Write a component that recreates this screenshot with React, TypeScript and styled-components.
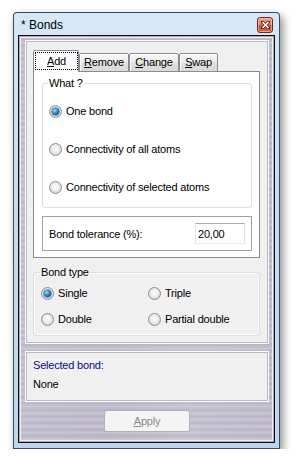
import React from "react";
import styled, { createGlobalStyle } from "styled-components";

const GlobalStyle = createGlobalStyle`
  html, body { margin: 0; padding: 0; background: #ffffff; }
  body {
    font-family: "Liberation Sans", Arial, sans-serif;
    font-size: 11px;
    color: #000;
  }
  * { box-sizing: border-box; }
`;

const Page = styled.div`
  padding: 12px 0 0 13px;
`;

const Window = styled.div`
  width: 267px;
  height: 437px;
  display: flex;
  flex-direction: column;
  padding: 0 4px 5px 4px;
  border: 1px solid rgba(25, 35, 55, 0.8);
  border-radius: 4px 4px 0 0;
  background: linear-gradient(180deg, #d6e7f8 0%, #c7ddf3 40%, #bdd6ef 100%);
  box-shadow: 3px 4px 9px rgba(0, 0, 0, 0.45);
`;

const TitleBar = styled.div`
  height: 22px;
  display: flex;
  align-items: flex-start;
  padding: 4px 2px 0 3px;
`;

const Title = styled.span`
  font-size: 12px;
  line-height: 14px;
  margin-top: 1px;
  color: #000;
`;

const CloseButton = styled.div`
  margin-left: auto;
  width: 16px;
  height: 16px;
  border: 1px solid #6b2a1e;
  border-radius: 3px;
  background: linear-gradient(180deg, #eba995 0%, #dd7d62 45%, #c84a2c 55%, #d4664a 100%);
  box-shadow: inset 0 0 0 1px rgba(255, 210, 200, 0.55);
  display: grid;
  place-items: center;
`;

const Client = styled.div`
  flex: 1;
  display: flex;
  flex-direction: column;
  padding: 4px 5px 0 6px;
  border: 1px solid #121212;
  background-color: #bfbbcb;
  background-image:
    repeating-linear-gradient(
      180deg,
      rgba(255, 255, 255, 0.22) 0 1px,
      transparent 1px 3px,
      rgba(70, 60, 100, 0.08) 3px 4px,
      transparent 4px 6px,
      rgba(255, 255, 255, 0.14) 6px 7px,
      transparent 7px 9px,
      rgba(70, 60, 100, 0.06) 9px 11px,
      transparent 11px 13px
    ),
    linear-gradient(90deg, rgba(255,255,255,0.08), rgba(255,255,255,0) 35%, rgba(255,255,255,0.12) 65%, rgba(255,255,255,0.02));
  box-shadow: inset 0 0 0 1px #a9a6b4, inset 0 0 0 2px rgba(255, 255, 255, 0.75);
`;

const Panel = styled.div<{ $pad: string; $mt?: number; $gap?: number }>`
  display: flex;
  flex-direction: column;
  gap: ${(p) => p.$gap ?? 0}px;
  margin-top: ${(p) => p.$mt ?? 0}px;
  border: 1px solid #fbfbfb;
  box-shadow: inset 0 0 0 1px #b9b9bf;
  background: #f0f0f0;
  padding: ${(p) => p.$pad};
`;

const TabStrip = styled.div`
  position: relative;
  z-index: 1;
  display: flex;
  align-items: flex-end;
  height: 22px;
  margin-bottom: -1px;
`;

const Tab = styled.div<{ $w: number; $active?: boolean }>`
  width: ${(p) => p.$w}px;
  height: ${(p) => (p.$active ? 22 : 19)}px;
  border: 1px solid #898c95;
  border-bottom: ${(p) => (p.$active ? "none" : "1px solid #898c95")};
  border-radius: 2px 2px 0 0;
  background: ${(p) =>
    p.$active
      ? "#ffffff"
      : "linear-gradient(180deg, #f6f6f6 0%, #ececec 48%, #e0e0e0 52%, #d9d9d9 100%)"};
  box-shadow: ${(p) => (p.$active ? "none" : "inset 0 1px 0 #fff, inset 1px 0 0 #fbfbfb")};
  display: flex;
  align-items: ${(p) => (p.$active ? "flex-start" : "center")};
  justify-content: center;
  letter-spacing: -0.2px;
  line-height: 13px;
  padding-bottom: ${(p) => (p.$active ? 0 : 1)}px;
`;

const FocusRing = styled.span`
  margin: 1px 0 0 1px;
  width: calc(100% - 1px);
  height: 18px;
  border: 1px dotted #000;
  display: flex;
  align-items: center;
  justify-content: center;
`;

const Acc = styled.span`
  text-decoration: underline;
  text-underline-offset: 1px;
`;

const TabPage = styled.div`
  border: 1px solid #898c95;
  background: #ffffff;
  padding: 5px 7px 6px 8px;
  display: flex;
  flex-direction: column;
  gap: 8px;
`;

const Group = styled.fieldset<{ $pad: string; $mt?: number }>`
  margin: ${(p) => p.$mt ?? 0}px 0 0 0;
  min-inline-size: 0;
  border: 1px solid #d5dfe5;
  border-radius: 3px;
  padding: ${(p) => p.$pad};
  box-shadow: inset 0 0 0 1px rgba(255, 255, 255, 0.7);
`;

const Legend = styled.legend`
  padding: 0 1px;
  margin-left: -1px;
  line-height: 13px;
  letter-spacing: -0.2px;
`;

const RadioColumn = styled.div`
  display: flex;
  flex-direction: column;
  gap: 24px;
`;

const RadioGrid = styled.div`
  display: grid;
  grid-template-columns: 107px 1fr;
  row-gap: 12px;
`;

const RadioRow = styled.label`
  display: flex;
  align-items: center;
  gap: 4px;
  height: 14px;
  line-height: 13px;
  letter-spacing: -0.2px;
  white-space: nowrap;
`;

const RadioDot = styled.span<{ $on?: boolean }>`
  width: 13px;
  height: 13px;
  flex: none;
  border-radius: 50%;
  border: 1px solid #8d8f92;
  background: radial-gradient(circle at 50% 45%, #fdfdfd 0%, #f2f2f2 35%, #d9d9d9 70%, #cfcfcf 100%);
  display: grid;
  place-items: center;
  &::after {
    content: "";
    display: ${(p) => (p.$on ? "block" : "none")};
    width: 7px;
    height: 7px;
    border-radius: 50%;
    background: radial-gradient(circle at 38% 35%, #a9e4ff 0%, #3fa6e0 30%, #1763a8 65%, #123868 100%);
    box-shadow: 0 0 0 0.5px #1a3a66;
  }
`;

const ToleranceBox = styled.div`
  height: 35px;
  border: 1px solid #a0a0a0;
  display: flex;
  align-items: center;
  justify-content: space-between;
  padding: 0 6px;
  letter-spacing: -0.2px;
`;

const TextBox = styled.input`
  width: 50px;
  height: 21px;
  border: 1px solid;
  border-color: #abadb3 #dbdfe6 #e3e9ef #e2e3ea;
  padding: 0 2px;
  font: inherit;
  font-size: 11px;
  letter-spacing: -0.2px;
  color: #000;
  background: #fff;
  outline: none;
`;

const InfoLine = styled.div<{ $accent?: boolean }>`
  line-height: 13px;
  letter-spacing: -0.2px;
  color: ${(p) => (p.$accent ? "#0a0a84" : "#000")};
`;

const ApplyButton = styled.button`
  align-self: center;
  margin-top: 8px;
  width: 86px;
  height: 22px;
  border: 1px solid #adb2b5;
  border-radius: 3px;
  background: #f4f4f4;
  color: #8a8a8a;
  font: inherit;
  font-size: 11px;
  letter-spacing: -0.2px;
  padding: 0;
`;

const tabs = [
  { acc: "A", rest: "dd", w: 46, active: true },
  { acc: "R", rest: "emove", w: 50 },
  { acc: "C", rest: "hange", w: 50 },
  { acc: "S", rest: "wap", w: 39 },
];

export default function App() {
  return (
    <>
      <GlobalStyle />
      <Page>
        <Window>
          <TitleBar>
            <Title>* Bonds</Title>
            <CloseButton>
              <svg width="9" height="8" viewBox="0 0 9 8">
                <path d="M1 0.5 L8 7.5 M8 0.5 L1 7.5" stroke="#5a1e12" strokeWidth="3" strokeLinecap="square" />
                <path d="M1.5 1 L7.5 7 M7.5 1 L1.5 7" stroke="#ffffff" strokeWidth="1.6" />
              </svg>
            </CloseButton>
          </TitleBar>
          <Client>
            <Panel $pad="9px 8px 7px 7px">
              <TabStrip>
                {tabs.map((t) => (
                  <Tab key={t.acc} $w={t.w} $active={t.active}>
                    {t.active ? (
                      <FocusRing>
                        <Acc>{t.acc}</Acc>
                        {t.rest}
                      </FocusRing>
                    ) : (
                      <span>
                        <Acc>{t.acc}</Acc>
                        {t.rest}
                      </span>
                    )}
                  </Tab>
                ))}
              </TabStrip>
              <TabPage>
                <Group $pad="14px 5px 13px 6px">
                  <Legend>What ?</Legend>
                  <RadioColumn>
                    <RadioRow>
                      <RadioDot $on />
                      One bond
                    </RadioRow>
                    <RadioRow>
                      <RadioDot />
                      Connectivity of all atoms
                    </RadioRow>
                    <RadioRow>
                      <RadioDot />
                      Connectivity of selected atoms
                    </RadioRow>
                  </RadioColumn>
                </Group>
                <ToleranceBox>
                  <span>Bond tolerance (%):</span>
                  <TextBox readOnly defaultValue="20,00" />
                </ToleranceBox>
              </TabPage>
              <Group $pad="7px 5px 9px 7px" $mt={8}>
                <Legend>Bond type</Legend>
                <RadioGrid>
                  <RadioRow>
                    <RadioDot $on />
                    Single
                  </RadioRow>
                  <RadioRow>
                    <RadioDot />
                    Triple
                  </RadioRow>
                  <RadioRow>
                    <RadioDot />
                    Double
                  </RadioRow>
                  <RadioRow>
                    <RadioDot />
                    Partial double
                  </RadioRow>
                </RadioGrid>
              </Group>
            </Panel>
            <Panel $pad="7px 7px 10px 7px" $mt={7} $gap={6}>
              <InfoLine $accent>Selected bond:</InfoLine>
              <InfoLine>None</InfoLine>
            </Panel>
            <ApplyButton disabled>
              <Acc>A</Acc>pply
            </ApplyButton>
          </Client>
        </Window>
      </Page>
    </>
  );
}
